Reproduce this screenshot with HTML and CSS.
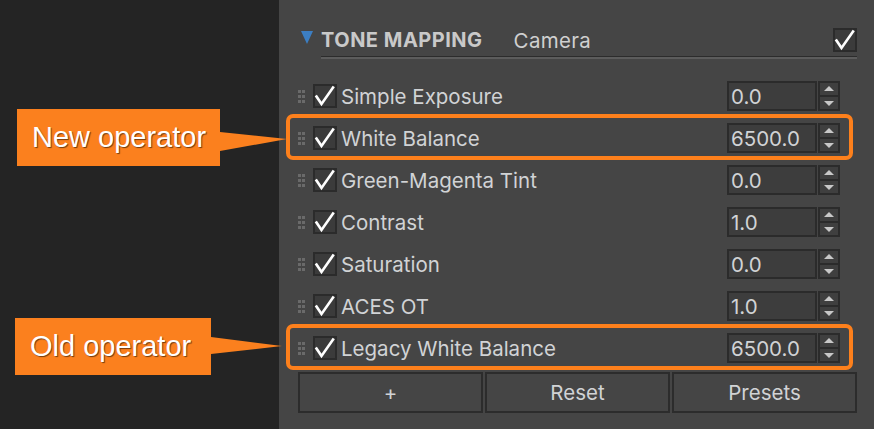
FILE: index.html
```html
<!DOCTYPE html>
<html lang="en">
<head>
<meta charset="utf-8">
<title>Tone Mapping</title>
<link rel="stylesheet" href="styles.css">
</head>
<body>
<div class="app">
  <aside class="side"></aside>

  <main class="panel">
    <div class="section-head">
      <svg class="twisty" width="12" height="13" viewBox="0 0 12 13"><polygon points="0,0 12,0 6,13" fill="#3c7ec2"/></svg>
      <div class="head-main">
        <div class="head-row">
          <span class="title">TONE MAPPING</span>
          <span class="subtitle">Camera</span>
          <span class="check on"><svg viewBox="0 0 24 24"><polyline points="3.5,12.5 8.5,20 20,3.5"/></svg></span>
        </div>
        <div class="rule"></div>
      </div>
    </div>

    <div class="ops">
      <div class="op">
        <svg class="grip" width="7" height="13" viewBox="0 0 7 13"><g fill="#6a6a6a"><rect x="0" y="0" width="3" height="3"/><rect x="4" y="0" width="3" height="3"/><rect x="0" y="5" width="3" height="3"/><rect x="4" y="5" width="3" height="3"/><rect x="0" y="10" width="3" height="3"/><rect x="4" y="10" width="3" height="3"/></g></svg>
        <span class="check on"><svg viewBox="0 0 24 24"><polyline points="3.5,12.5 8.5,20 20,3.5"/></svg></span>
        <span class="label">Simple Exposure</span>
        <span class="field">0.0</span>
        <span class="spin"><span class="spin-up"></span><span class="spin-down"></span></span>
      </div>
      <div class="op marked">
        <svg class="grip" width="7" height="13" viewBox="0 0 7 13"><g fill="#6a6a6a"><rect x="0" y="0" width="3" height="3"/><rect x="4" y="0" width="3" height="3"/><rect x="0" y="5" width="3" height="3"/><rect x="4" y="5" width="3" height="3"/><rect x="0" y="10" width="3" height="3"/><rect x="4" y="10" width="3" height="3"/></g></svg>
        <span class="check on"><svg viewBox="0 0 24 24"><polyline points="3.5,12.5 8.5,20 20,3.5"/></svg></span>
        <span class="label">White Balance</span>
        <span class="field">6500.0</span>
        <span class="spin"><span class="spin-up"></span><span class="spin-down"></span></span>
      </div>
      <div class="op">
        <svg class="grip" width="7" height="13" viewBox="0 0 7 13"><g fill="#6a6a6a"><rect x="0" y="0" width="3" height="3"/><rect x="4" y="0" width="3" height="3"/><rect x="0" y="5" width="3" height="3"/><rect x="4" y="5" width="3" height="3"/><rect x="0" y="10" width="3" height="3"/><rect x="4" y="10" width="3" height="3"/></g></svg>
        <span class="check on"><svg viewBox="0 0 24 24"><polyline points="3.5,12.5 8.5,20 20,3.5"/></svg></span>
        <span class="label">Green-Magenta Tint</span>
        <span class="field">0.0</span>
        <span class="spin"><span class="spin-up"></span><span class="spin-down"></span></span>
      </div>
      <div class="op">
        <svg class="grip" width="7" height="13" viewBox="0 0 7 13"><g fill="#6a6a6a"><rect x="0" y="0" width="3" height="3"/><rect x="4" y="0" width="3" height="3"/><rect x="0" y="5" width="3" height="3"/><rect x="4" y="5" width="3" height="3"/><rect x="0" y="10" width="3" height="3"/><rect x="4" y="10" width="3" height="3"/></g></svg>
        <span class="check on"><svg viewBox="0 0 24 24"><polyline points="3.5,12.5 8.5,20 20,3.5"/></svg></span>
        <span class="label">Contrast</span>
        <span class="field">1.0</span>
        <span class="spin"><span class="spin-up"></span><span class="spin-down"></span></span>
      </div>
      <div class="op">
        <svg class="grip" width="7" height="13" viewBox="0 0 7 13"><g fill="#6a6a6a"><rect x="0" y="0" width="3" height="3"/><rect x="4" y="0" width="3" height="3"/><rect x="0" y="5" width="3" height="3"/><rect x="4" y="5" width="3" height="3"/><rect x="0" y="10" width="3" height="3"/><rect x="4" y="10" width="3" height="3"/></g></svg>
        <span class="check on"><svg viewBox="0 0 24 24"><polyline points="3.5,12.5 8.5,20 20,3.5"/></svg></span>
        <span class="label">Saturation</span>
        <span class="field">0.0</span>
        <span class="spin"><span class="spin-up"></span><span class="spin-down"></span></span>
      </div>
      <div class="op">
        <svg class="grip" width="7" height="13" viewBox="0 0 7 13"><g fill="#6a6a6a"><rect x="0" y="0" width="3" height="3"/><rect x="4" y="0" width="3" height="3"/><rect x="0" y="5" width="3" height="3"/><rect x="4" y="5" width="3" height="3"/><rect x="0" y="10" width="3" height="3"/><rect x="4" y="10" width="3" height="3"/></g></svg>
        <span class="check on"><svg viewBox="0 0 24 24"><polyline points="3.5,12.5 8.5,20 20,3.5"/></svg></span>
        <span class="label">ACES OT</span>
        <span class="field">1.0</span>
        <span class="spin"><span class="spin-up"></span><span class="spin-down"></span></span>
      </div>
      <div class="op marked">
        <svg class="grip" width="7" height="13" viewBox="0 0 7 13"><g fill="#6a6a6a"><rect x="0" y="0" width="3" height="3"/><rect x="4" y="0" width="3" height="3"/><rect x="0" y="5" width="3" height="3"/><rect x="4" y="5" width="3" height="3"/><rect x="0" y="10" width="3" height="3"/><rect x="4" y="10" width="3" height="3"/></g></svg>
        <span class="check on"><svg viewBox="0 0 24 24"><polyline points="3.5,12.5 8.5,20 20,3.5"/></svg></span>
        <span class="label">Legacy White Balance</span>
        <span class="field">6500.0</span>
        <span class="spin"><span class="spin-up"></span><span class="spin-down"></span></span>
      </div>
    </div>

    <div class="actions">
      <button class="btn">+</button>
      <button class="btn">Reset</button>
      <button class="btn">Presets</button>
    </div>
  </main>

  <div class="callout callout-new">New operator</div>
  <div class="callout callout-old">Old operator</div>
</div>
</body>
</html>
```

FILE: styles.css
```css
* { box-sizing: border-box; }

html, body {
  margin: 0;
  padding: 0;
  width: 874px;
  height: 429px;
  overflow: hidden;
  background: #242424;
  font-family: "Inter", "Noto Sans", sans-serif;
}

.app {
  position: relative;
  display: flex;
  width: 874px;
  height: 429px;
}

.side {
  width: 279px;
  flex: none;
  background: #242424;
}

.panel {
  flex: 1;
  background: #454545;
  display: flex;
  flex-direction: column;
}

/* ---- section header ---- */
.section-head {
  display: flex;
  margin: 24px 17px 0 22px;
}

.twisty {
  flex: none;
  margin: 7px 8px 0 0;
}

.head-main {
  flex: 1;
  display: flex;
  flex-direction: column;
}

.head-row {
  height: 32px;
  display: flex;
  align-items: center;
}

.title {
  font-weight: 700;
  font-size: 20px;
  color: #c9c9c9;
  letter-spacing: 0.5px;
}

.subtitle {
  margin-left: 31px;
  font-size: 20.5px;
  letter-spacing: 0.3px;
  color: #d0d0d0;
  flex: 1;
}

.rule {
  height: 3px;
  border-top: 1px solid #2c2c2c;
  background: #5c5c5c;
}

/* ---- checkbox ---- */
.check {
  flex: none;
  position: relative;
  width: 24px;
  height: 24px;
  border: 2px solid #2b2b2b;
  background: #3b3b3b;
}

.check svg {
  position: absolute;
  left: -2px;
  top: -2px;
  width: 24px;
  height: 24px;
  fill: none;
  stroke: #ffffff;
  stroke-width: 2.6;
  stroke-linecap: square;
}

/* ---- operator rows ---- */
.ops {
  margin: 16px 21px 0 7px;
  display: flex;
  flex-direction: column;
}

.op {
  position: relative;
  height: 42px;
  display: flex;
  align-items: center;
  padding: 0 13px 0 12px;
}

.op.marked::after {
  content: "";
  position: absolute;
  left: 0;
  right: 0;
  top: -3px;
  bottom: -1px;
  border: 4px solid #fd801c;
  border-radius: 7px;
}

.grip {
  flex: none;
  margin-right: 8px;
}

.op .check {
  margin-right: 4px;
}

.label {
  flex: 1;
  font-size: 20.5px;
  color: #d1d3d5;
  white-space: nowrap;
}

.field {
  flex: none;
  width: 90px;
  height: 30px;
  border: 2px solid #2b2b2b;
  background: #3d3d3d;
  font-size: 20.5px;
  color: #d1d3d5;
  padding-left: 2px;
  display: flex;
  align-items: center;
}

.spin {
  flex: none;
  width: 22px;
  height: 30px;
  margin-left: 1px;
  display: flex;
  flex-direction: column;
}

.spin-up, .spin-down {
  flex: 1;
  border: 2px solid #2b2b2b;
  background: #3f3f3f;
  position: relative;
}

.spin-down { border-top-width: 1px; }
.spin-up { border-bottom-width: 1px; }

.spin-up::before, .spin-down::before {
  content: "";
  position: absolute;
  left: 50%;
  top: 50%;
  margin-left: -5px;
  border-left: 5px solid transparent;
  border-right: 5px solid transparent;
}

.spin-up::before {
  margin-top: -3px;
  border-bottom: 5px solid #c8c8c8;
}

.spin-down::before {
  margin-top: -2px;
  border-top: 5px solid #c8c8c8;
}

/* ---- bottom buttons ---- */
.actions {
  display: flex;
  gap: 2px;
  margin: 3px 17px 0 19px;
  height: 41px;
}

.btn {
  flex: 1;
  border: 2px solid #2c2c2c;
  background: #454545;
  color: #d1d3d5;
  font-family: inherit;
  font-size: 20.5px;
  padding: 0;
}

/* ---- annotation callouts ---- */
.callout {
  position: absolute;
  background: #fb801e;
  color: #ffffff;
  font-family: "Liberation Sans", Arial, sans-serif;
  font-size: 29px;
  text-shadow: 1px 1px 1px rgba(0, 0, 0, 0.55);
  display: flex;
  align-items: center;
  padding-left: 15px;
}

.callout::after {
  content: "";
  position: absolute;
  left: 100%;
  background: #fb801e;
}

.callout-new {
  left: 17px;
  top: 109px;
  width: 203px;
  height: 57px;
}

.callout-new::after {
  top: 23px;
  width: 67px;
  height: 19px;
  clip-path: polygon(0 0, 100% 37%, 0 100%);
}

.callout-old {
  left: 15px;
  top: 318px;
  width: 196px;
  height: 57px;
}

.callout-old::after {
  top: 19px;
  width: 71px;
  height: 17px;
  clip-path: polygon(0 0, 100% 53%, 0 100%);
}
```
